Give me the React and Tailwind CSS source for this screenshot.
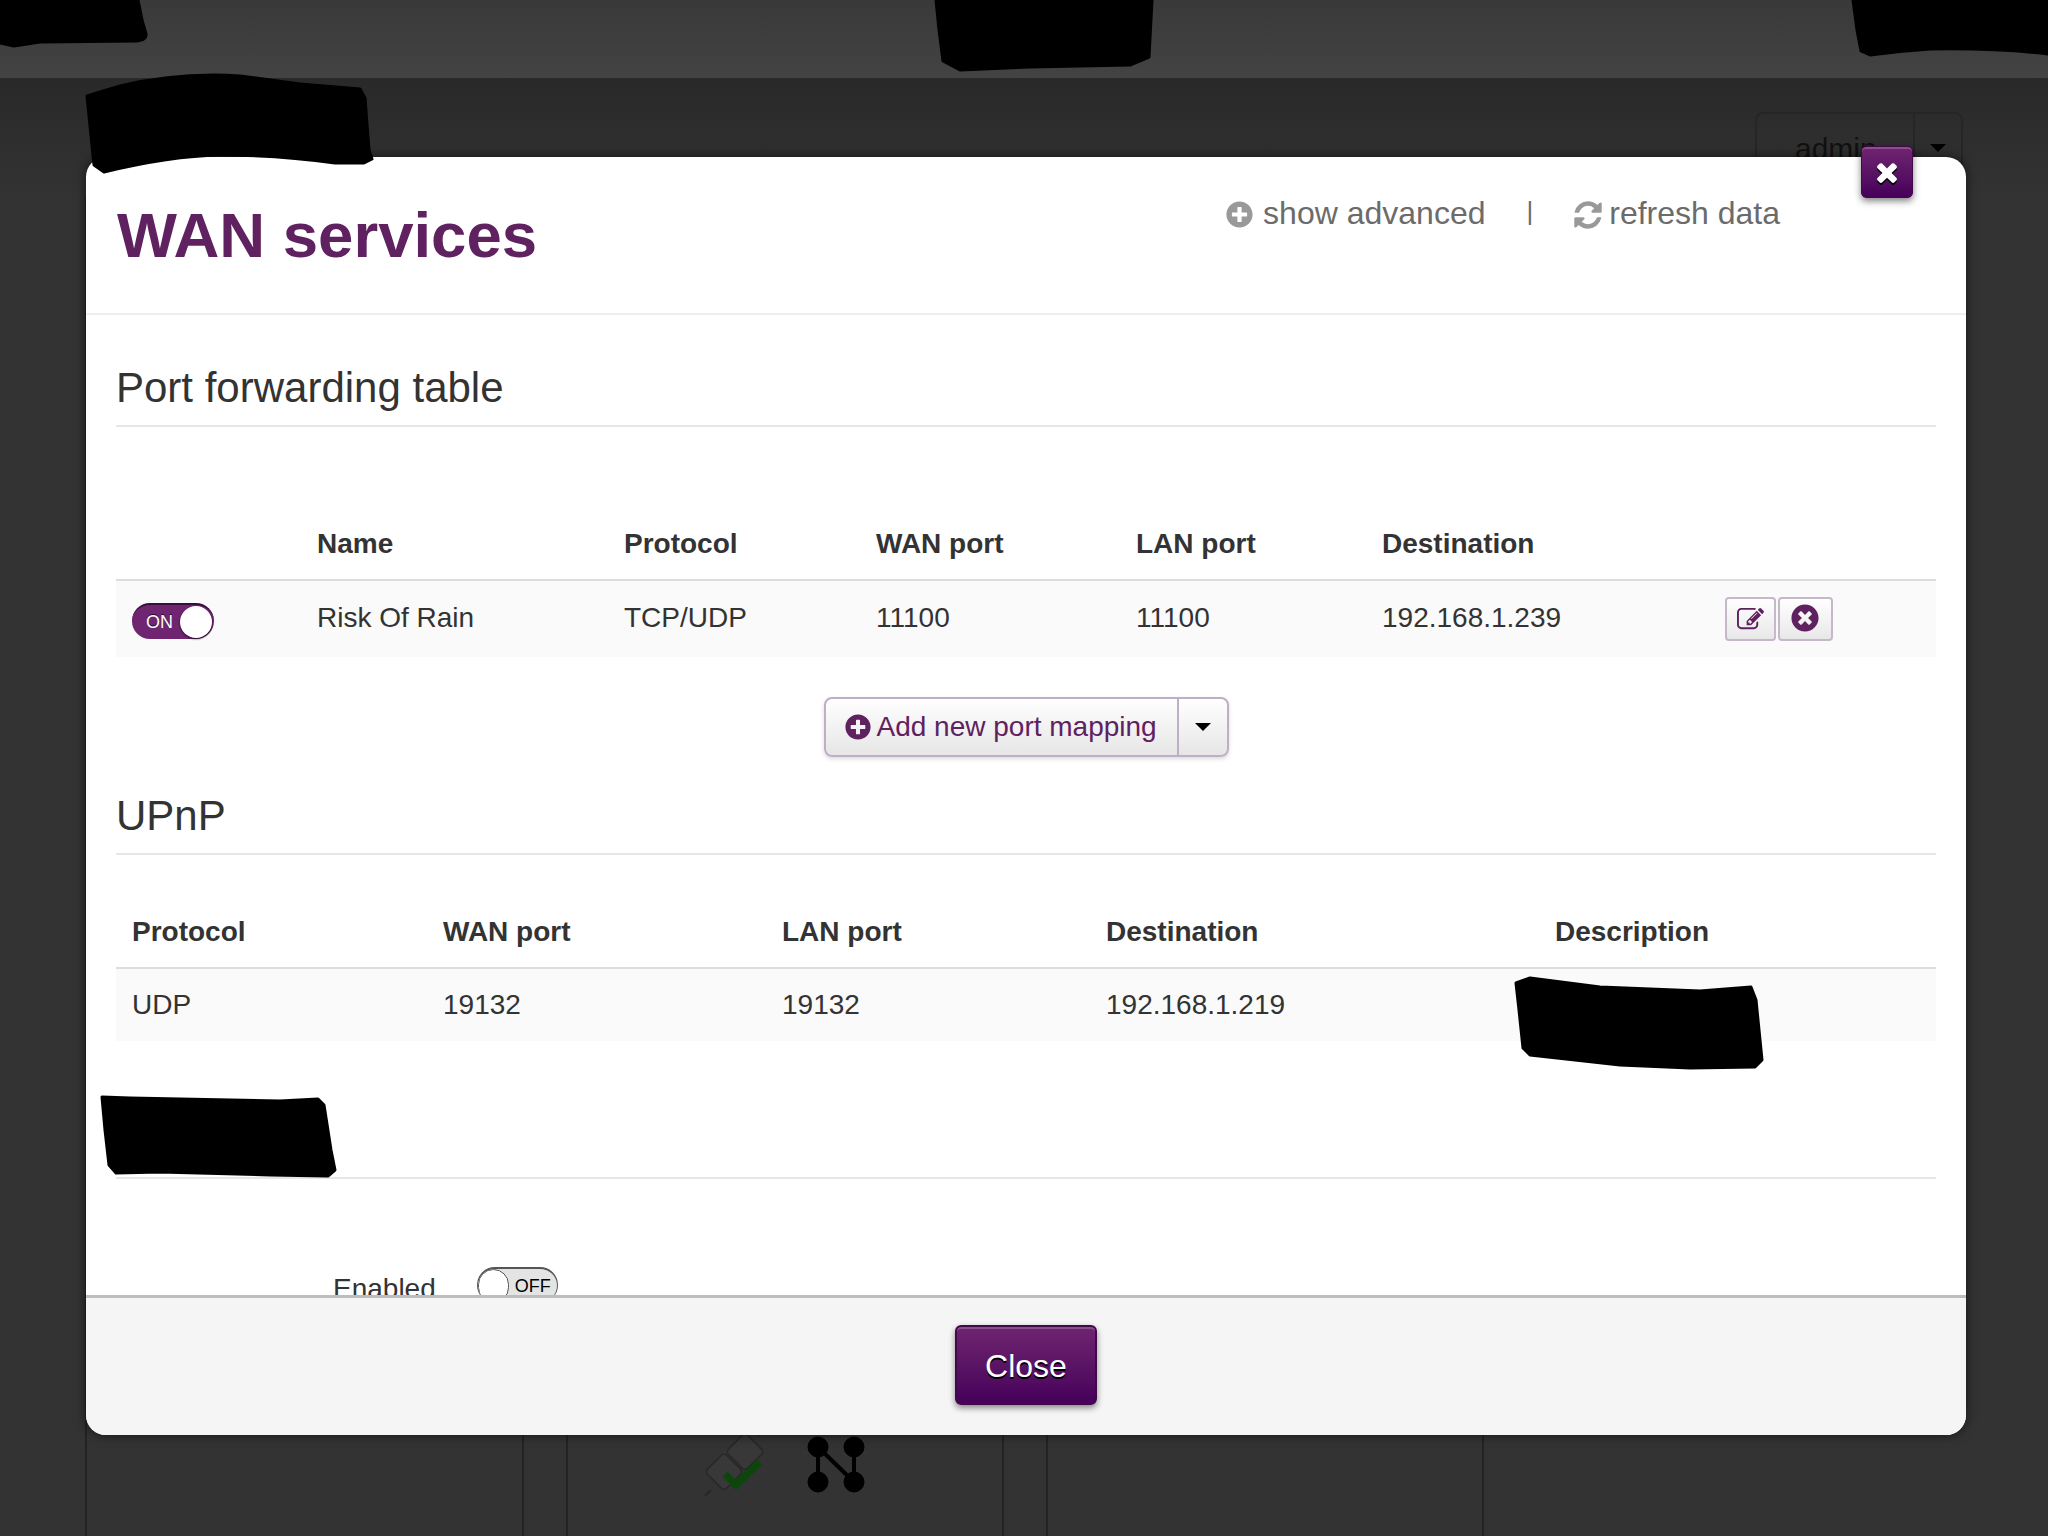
import { FaPlusCircle, FaTimesCircle } from 'react-icons/fa'

const portRows = [['Risk Of Rain', 'TCP/UDP', '11100', '11100', '192.168.1.239']]

// font awesome 4 glyphs, react-icons only ships the thinner fa5 versions
const faRefresh = 'M1639 1056q0 5-1 7-64 268-268 434.500t-478 166.500q-146 0-282.500-55t-243.500-157l-129 129q-19 19-45 19t-45-19-19-45v-448q0-26 19-45t45-19h448q26 0 45 19t19 45-19 45l-137 137q71 66 161 102t187 36q134 0 250-65t186-179q11-17 53-117 8-23 30-23h192q13 0 22.500 9.500t9.500 22.500zm25-800v448q0 26-19 45t-45 19h-448q-26 0-45-19t-19-45 19-45l138-138q-148-137-349-137-134 0-250 65t-186 179q-11 17-53 117-8 23-30 23h-199q-13 0-22.500-9.500t-9.500-22.500v-7q65-268 270-434.500t480-166.500q146 0 284 55.500t245 156.500l130-129q19-19 45-19t45 19 19 45z'
const faTimes = 'M1490 1322q0 40-28 68l-136 136q-28 28-68 28t-68-28l-294-294-294 294q-28 28-68 28t-68-28l-136-136q-28-28-28-68t28-68l294-294-294-294q-28-28-28-68t28-68l136-136q28-28 68-28t68 28l294 294 294-294q28-28 68-28t68 28l136 136q28 28 28 68t-28 68l-294 294 294 294q28 28 28 68z'
const faEdit = 'M888 1184l116-116-152-152-116 116v56h96v96h56zm440-720q-16-16-33 1l-350 350q-17 17-1 33t33-1l350-350q17-17 1-33zm80 594v190q0 119-84.500 203.500t-203.500 84.500h-832q-119 0-203.500-84.500t-84.500-203.500v-832q0-119 84.500-203.500t203.500-84.500h832q63 0 117 25 15 7 18 23 3 17-9 29l-49 49q-14 14-32 8-23-6-45-6h-832q-66 0-113 47t-47 113v832q0 66 47 113t113 47h832q66 0 113-47t47-113v-126q0-13 9-22l64-64q15-15 35-7t20 29zm-96-738l288 288-672 672h-288v-288zm444 132l-92 92-288-288 92-92q28-28 68-28t68 28l152 152q28 28 28 68t-28 68z'

function Fa4({ d, size, className }) {
  return (
    <svg className={className} width={size} height={size} viewBox="0 0 1792 1792" fill="currentColor">
      <path d={d} />
    </svg>
  )
}

function Toggle({ on }) {
  if (on) {
    return (
      <div className="w-[82px] h-[36px] rounded-full bg-[#6f2570] border-t-2 border-[#3d0a42] flex items-center justify-between pl-[14px] pr-[2px]">
        <span className="text-[18px] text-white [text-shadow:0_-1px_0_#2a002e]">ON</span>
        <span className="w-[32px] h-[32px] rounded-full bg-white shadow-[0_1px_2px_rgba(0,0,0,0.8)]" />
      </div>
    )
  }
  return (
    <div className="w-[81px] h-[36px] rounded-full bg-[#e4e4e4] border-t-2 border-x border-[#555] flex items-center gap-[6px] overflow-hidden">
      <span className="w-[31px] h-[34px] rounded-full bg-white border border-[#555]" />
      <span className="text-[18px] text-black">OFF</span>
    </div>
  )
}

function SectionTitle({ children }) {
  return (
    <h2 className="h-[82px] border-b-2 border-[#e6e6e6] text-[42px] leading-[86px] text-[#333]">{children}</h2>
  )
}

function Backdrop() {
  return (
    <div className="h-[1536px] flex flex-col bg-[#333]">
      <div className="h-[78px] shrink-0 bg-gradient-to-b from-[#393939] to-[#434343]" />
      <div className="h-[120px] shrink-0 bg-gradient-to-b from-[#292929] to-[#333] flex justify-end pt-[34px] pr-[85px]">
        <div className="w-[208px] h-[80px] border-2 border-[#262626] rounded-[8px] flex">
          <div className="w-[156px] pl-[38px] pt-[12px] text-[30px] text-[#111]">admin</div>
          <div className="flex-1 border-l-2 border-[#262626] flex justify-center pt-[30px]">
            <span className="w-0 h-0 border-x-[8px] border-x-transparent border-t-[8px] border-t-black" />
          </div>
        </div>
      </div>
      <div className="flex-1 flex gap-[42px] pl-[85px]">
        <div className="w-[439px] border-x-2 border-[#232323]" />
        <div className="w-[438px] border-x-2 border-[#232323]" />
        <div className="w-[438px] border-x-2 border-[#232323]" />
      </div>
    </div>
  )
}

function BehindIcons() {
  return (
    <svg className="absolute left-[700px] top-[1430px]" width="175" height="75" viewBox="0 0 175 75">
      <g fill="#383838" stroke="#272727" strokeWidth="1.5">
        <rect x="32" y="8" width="27" height="27" rx="4" transform="rotate(45 45 21)" />
        <rect x="11" y="28" width="27" height="27" rx="4" transform="rotate(45 24 41)" />
      </g>
      <path d="M5 66 L11 60 M58 6 L64 0" stroke="#272727" strokeWidth="2" />
      <path d="M25 44 L36 55 L60 32" fill="none" stroke="#0b470b" strokeWidth="7" />
      <g fill="#000" stroke="#000">
        <circle cx="118" cy="17" r="10" />
        <circle cx="154" cy="17" r="10" />
        <circle cx="118" cy="52" r="10" />
        <circle cx="154" cy="52" r="10" />
        <path d="M118 17 V52 M118 17 L154 52 M154 17 V52" strokeWidth="4" fill="none" />
      </g>
    </svg>
  )
}

function Redactions() {
  return (
    <svg className="absolute inset-0 pointer-events-none" width="2048" height="1536" viewBox="0 0 2048 1536">
      <g fill="#000" stroke="#000" strokeWidth="3" strokeLinejoin="round">
        <path d="M0 0 H138 L142 20 L146 34 Q147 40 136 41 L40 42 L14 46 L0 43 Z" />
        <path d="M87 96 L120 86 Q180 72 240 76 L300 84 L360 89 L365 98 L369 150 L372 159 L364 163 L335 163 Q280 155 220 155 Q170 156 104 172 L94 165 Z" />
        <path d="M936 0 H1152 L1149 57 L1130 65 L1030 67 L960 70 L943 61 L939 30 Z" />
        <path d="M1853 0 H2048 V54 Q2000 48 1930 49 Q1900 51 1870 55 L1861 51 L1857 30 Z" />
        <path d="M1516 983 L1530 978 L1600 987 L1700 991 L1751 987 L1756 1000 L1762 1060 L1755 1067 L1690 1068 L1620 1065 L1530 1055 L1523 1048 L1519 1010 Z" />
        <path d="M102 1097 L130 1098 L280 1101 L318 1099 L324 1105 L331 1150 L335 1170 L328 1176 L270 1175 L160 1172 L116 1173 L109 1165 L105 1130 Z" />
      </g>
    </svg>
  )
}

export default function App() {
  return (
    <div className="relative w-[2048px] h-[1536px] overflow-hidden font-['Liberation_Sans',Arial,sans-serif] text-[#333]">
      <Backdrop />
      <BehindIcons />

      {/* Modal */}
      <div className="absolute left-[86px] top-[157px] w-[1880px] h-[1278px] bg-white rounded-[20px] shadow-[0_0_12px_rgba(0,0,0,0.6)] flex flex-col overflow-hidden">
        <div className="h-[158px] shrink-0 border-b-2 border-[#eeeeee] flex justify-between pl-[31px]">
          <h1 className="text-[63.5px] font-bold leading-none text-[#5f2160] pt-[47px]">WAN services</h1>
          <div className="flex items-start pt-[38px] pr-[186px] text-[32px] leading-[36px] text-[#6b6b6b]">
            <FaPlusCircle className="text-[#999] text-[27px] mt-[6px] mr-[10px]" />
            <span>show advanced</span>
            <span className="ml-[41px] mr-[41px] text-[26px] leading-[32px]">|</span>
            <Fa4 d={faRefresh} size={32} className="text-[#999] mt-[4px] -ml-[2px] mr-[5px]" />
            <span>refresh data</span>
          </div>
        </div>

        <div className="flex-1 min-h-0 overflow-hidden px-[30px] pt-[30px]">
          <SectionTitle>Port forwarding table</SectionTitle>

          <table className="table-fixed w-full mt-[72px] text-[28px] text-left">
            <colgroup>
              <col className="w-[185px]" />
              <col className="w-[307px]" />
              <col className="w-[252px]" />
              <col className="w-[260px]" />
              <col className="w-[246px]" />
              <col className="w-[343px]" />
              <col />
            </colgroup>
            <thead>
              <tr className="h-[81px] border-b-2 border-[#dddddd]">
                <th />
                <th className="px-4 pt-[10px] font-bold">Name</th>
                <th className="px-4 pt-[10px] font-bold">Protocol</th>
                <th className="px-4 pt-[10px] font-bold">WAN port</th>
                <th className="px-4 pt-[10px] font-bold">LAN port</th>
                <th className="px-4 pt-[10px] font-bold">Destination</th>
                <th />
              </tr>
            </thead>
            <tbody>
              {portRows.map((row) => (
                <tr key={row[0]} className="h-[77px] bg-[#fafafa]">
                  <td className="px-4"><div className="pt-[4px]"><Toggle on /></div></td>
                  {row.map((cell) => (
                    <td key={cell} className="px-4 pb-[2px]">{cell}</td>
                  ))}
                  <td className="px-4">
                    <div className="flex gap-[2px]">
                      <button className="w-[51px] h-[44px] flex items-center justify-center rounded-[4px] border-2 border-[#c5b8c8] bg-gradient-to-b from-white to-[#e8e8e8] text-[#5f2160]">
                        <Fa4 d={faEdit} size={27} />
                      </button>
                      <button className="w-[55px] h-[44px] flex items-center justify-center rounded-[4px] border-2 border-[#c5b8c8] bg-gradient-to-b from-white to-[#e8e8e8] text-[#5f2160] text-[28px]">
                        <FaTimesCircle className="-mt-[3px] -ml-[2px]" />
                      </button>
                    </div>
                  </td>
                </tr>
              ))}
            </tbody>
          </table>

          <div className="flex justify-center mt-[40px]">
            <div className="flex w-[405px] h-[60px] rounded-[8px] border-2 border-[#c0aec6] bg-gradient-to-b from-white to-[#e6e6e6] shadow-[0_2px_4px_rgba(0,0,0,0.15)] text-[28px] text-[#5f2160]">
              <div className="flex-1 flex items-center pl-[19px] gap-[6px]">
                <FaPlusCircle className="text-[26px]" />
                <span>Add new port mapping</span>
              </div>
              <div className="w-[50px] border-l-2 border-[#c0aec6] flex items-center justify-center">
                <span className="w-0 h-0 border-x-[8px] border-x-transparent border-t-[8px] border-t-black" />
              </div>
            </div>
          </div>

          <div className="mt-[16px]">
            <SectionTitle>UPnP</SectionTitle>
          </div>

          <table className="table-fixed w-full mt-[38px] text-[28px] text-left">
            <colgroup>
              <col className="w-[311px]" />
              <col className="w-[339px]" />
              <col className="w-[324px]" />
              <col className="w-[449px]" />
              <col />
            </colgroup>
            <thead>
              <tr className="h-[75px] border-b-2 border-[#dddddd]">
                <th className="px-4 pt-[3px] font-bold">Protocol</th>
                <th className="px-4 pt-[3px] font-bold">WAN port</th>
                <th className="px-4 pt-[3px] font-bold">LAN port</th>
                <th className="px-4 pt-[3px] font-bold">Destination</th>
                <th className="px-4 pt-[3px] font-bold">Description</th>
              </tr>
            </thead>
            <tbody>
              <tr className="h-[73px] bg-[#fafafa]">
                <td className="px-4">UDP</td>
                <td className="px-4">19132</td>
                <td className="px-4">19132</td>
                <td className="px-4">192.168.1.219</td>
                <td className="px-4" />
              </tr>
            </tbody>
          </table>

          <div className="h-[138px] border-b-2 border-[#e6e6e6]" />

          <div className="flex mt-[88px] pl-[217px] gap-[41px]">
            <span className="text-[28px] leading-[32px] pt-[6px]">Enabled</span>
            <Toggle />
          </div>
        </div>

        <div className="h-[140px] shrink-0 border-t-[3px] border-[#bdbdbd] bg-[#f5f5f5] flex justify-center pt-[27px]">
          <button className="w-[142px] h-[80px] pt-[2px] rounded-[6px] border-2 border-[#43084a] bg-gradient-to-b from-[#6f2470] to-[#47005a] shadow-[inset_0_2px_0_rgba(255,255,255,0.2),0_3px_6px_rgba(0,0,0,0.45)] text-[32px] text-white [text-shadow:0_2px_0_#000]">
            Close
          </button>
        </div>
      </div>

      {/* Modal close badge */}
      <button className="absolute left-[1861px] top-[146px] w-[52px] h-[52px] rounded-[5px] border border-[#43084a] bg-gradient-to-b from-[#6f2470] to-[#47005a] shadow-[inset_0_2px_0_rgba(255,255,255,0.2),0_3px_7px_rgba(0,0,0,0.5)] flex items-center justify-center text-white">
        <Fa4 d={faTimes} size={30} className="drop-shadow-[0_2px_0_#000]" />
      </button>

      <Redactions />
    </div>
  )
}
